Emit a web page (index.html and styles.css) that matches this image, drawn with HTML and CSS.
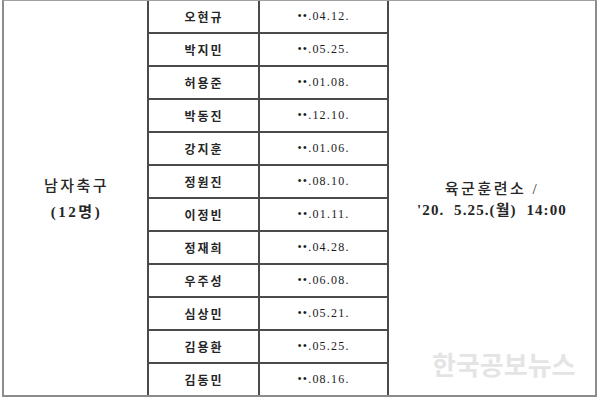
FILE: index.html
```html
<!DOCTYPE html>
<html lang="ko">
<head>
<meta charset="utf-8">
<title>남자축구 입소 명단</title>
<link rel="stylesheet" href="styles.css">
</head>
<body>
<div class="sheet">
  <div class="group"><span class="g1">남자축구</span><span class="g2">(12명)</span></div>
  <div class="name">오현규</div><div class="date">••.04.12.</div>
  <div class="place"><span class="p1">육군훈련소 /</span><span class="p2">'20.&nbsp; 5.25.(월)&nbsp; 14:00</span></div>
  <div class="name">박지민</div><div class="date">••.05.25.</div>
  <div class="name">허용준</div><div class="date">••.01.08.</div>
  <div class="name">박동진</div><div class="date">••.12.10.</div>
  <div class="name">강지훈</div><div class="date">••.01.06.</div>
  <div class="name">정원진</div><div class="date">••.08.10.</div>
  <div class="name">이정빈</div><div class="date">••.01.11.</div>
  <div class="name">정재희</div><div class="date">••.04.28.</div>
  <div class="name">우주성</div><div class="date">••.06.08.</div>
  <div class="name">심상민</div><div class="date">••.05.21.</div>
  <div class="name">김용환</div><div class="date">••.05.25.</div>
  <div class="name">김동민</div><div class="date">••.08.16.</div>
  <div class="watermark">한국공보뉴스</div>
</div>
</body>
</html>
```
FILE: styles.css
```css
html, body {
  margin: 0;
  padding: 0;
  background: #ffffff;
}
body {
  width: 600px;
  height: 403px;
  overflow: hidden;
  font-family: "Liberation Serif", "Noto Sans CJK KR", serif;
  color: #1a1a1a;
}
.sheet {
  position: relative;
  margin-left: 2px;
  width: 595px;
  box-sizing: border-box;
  display: grid;
  grid-template-columns: 143px 109px 127px 206px;
  grid-template-rows: repeat(12, 31px);
  gap: 2px;
  background: #4a4a4a;
  border-top: 1px solid #a0a0a0;
  border-left: 2px solid #8c8c8c;
  border-right: 2px solid #8c8c8c;
  border-bottom: 2px solid #8c8c8c;
}
.sheet > div {
  background: #ffffff;
}
.group, .place {
  grid-row: 1 / span 12;
  display: flex;
  flex-direction: column;
  align-items: center;
  justify-content: center;
}
.group {
  grid-column: 1;
  font-size: 15px;
  line-height: 26px;
  padding-top: 2px;
  color: #262626;
}
.g1 {
  font-weight: 500;
  letter-spacing: 2.5px;
  padding-left: 2px;
}
.g2 {
  font-weight: 700;
  letter-spacing: 2.5px;
  padding-left: 2px;
}
.place {
  grid-column: 4;
  font-size: 15px;
  line-height: 21px;
  padding-top: 4px;
  color: #262626;
}
.p1 {
  font-weight: 500;
  letter-spacing: 2.5px;
}
.p2 {
  font-weight: 700;
  letter-spacing: 1.1px;
}
.name {
  grid-column: 2;
  display: flex;
  align-items: center;
  justify-content: center;
  font-family: "Noto Sans CJK KR", sans-serif;
  font-size: 12px;
  font-weight: 700;
  letter-spacing: 2px;
  padding-left: 1px;
  color: #262626;
}
.date {
  grid-column: 3;
  display: flex;
  align-items: center;
  justify-content: center;
  font-size: 12px;
  letter-spacing: 1.2px;
  color: #1a1a1a;
}
.sheet > .watermark {
  position: absolute;
  left: 428px;
  top: 348px;
  background: transparent;
  font-family: "Noto Sans CJK KR", sans-serif;
  font-size: 26px;
  font-weight: 700;
  line-height: 30px;
  color: #e4e4e4;
  pointer-events: none;
}
```
